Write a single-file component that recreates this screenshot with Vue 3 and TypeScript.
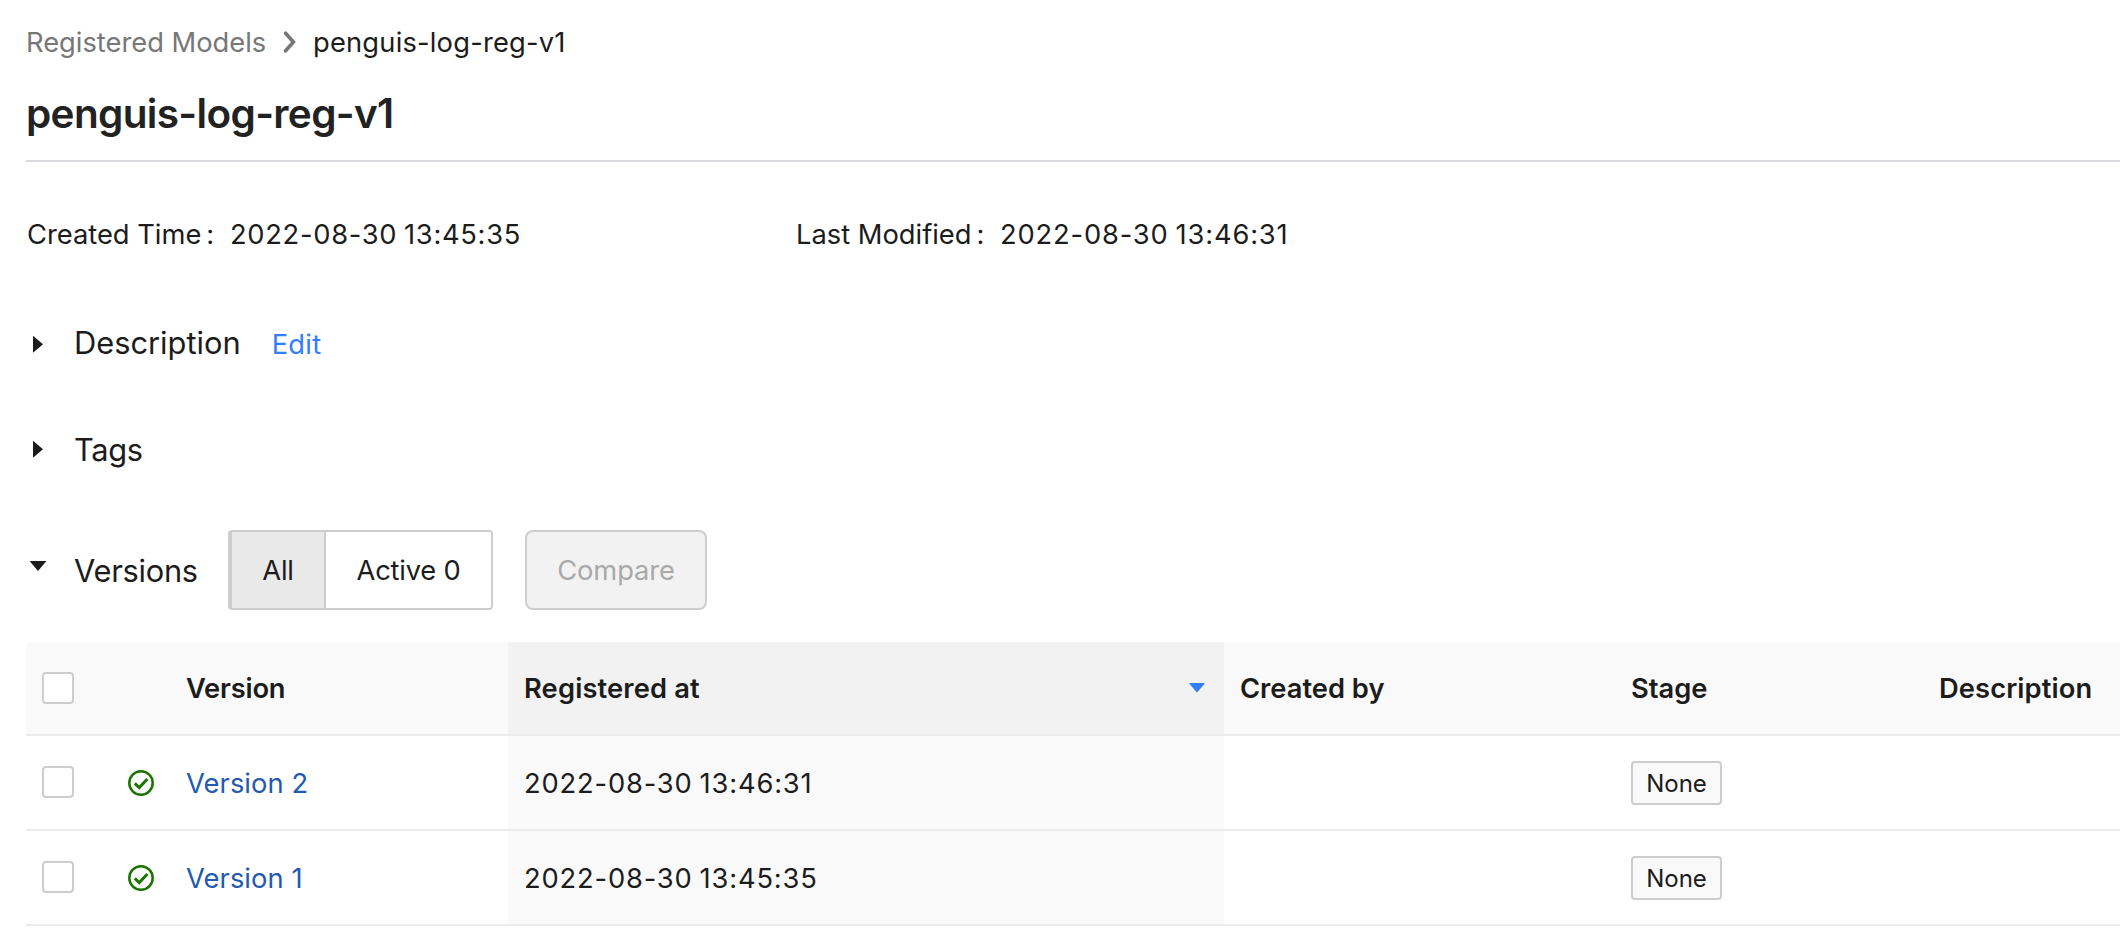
<script setup lang="ts">
interface ModelVersion {
  name: string
  registeredAt: string
  stage: string
}

const modelName = 'penguis-log-reg-v1'
const versions: ModelVersion[] = [
  { name: 'Version 2', registeredAt: '2022-08-30 13:46:31', stage: 'None' },
  { name: 'Version 1', registeredAt: '2022-08-30 13:45:35', stage: 'None' },
]
</script>

<template>
  <main class="page">
    <nav class="breadcrumb">
      <a class="crumb-link">Registered Models</a>
      <svg class="chevron" width="14" height="22" viewBox="0 0 14 22">
        <path d="M2.6 2.2 L10.4 11 L2.6 19.8" />
      </svg>
      <span class="crumb-current">{{ modelName }}</span>
    </nav>

    <h1 class="title">{{ modelName }}</h1>

    <dl class="meta">
      <div class="meta-item">
        <dt>Created Time<span class="colon">:</span></dt>
        <dd class="created-value">2022-08-30 13:45:35</dd>
      </div>
      <div class="meta-item modified">
        <dt>Last Modified<span class="colon">:</span></dt>
        <dd>2022-08-30 13:46:31</dd>
      </div>
    </dl>

    <section class="panel">
      <svg class="caret caret-description" width="18" height="18" viewBox="0 0 18 18"><path d="M4 0.7 L14 9.2 L4 17.7 Z" /></svg>
      <div class="panel-heading">
        <h2>Description</h2>
        <a class="edit">Edit</a>
      </div>
    </section>

    <section class="panel tags">
      <svg class="caret caret-tags" width="18" height="18" viewBox="0 0 18 18"><path d="M4 0.7 L14 9.2 L4 17.7 Z" /></svg>
      <h2 class="tight">Tags</h2>
    </section>

    <section class="panel versions">
      <svg class="caret caret-versions" width="18" height="10" viewBox="0 0 18 10"><path d="M0.6 0 L17.4 0 L9 10 Z" /></svg>
      <h2 class="versions-title">Versions</h2>
      <div class="segmented">
        <button class="segment selected">All</button>
        <button class="segment">Active 0</button>
      </div>
      <button class="compare" disabled>Compare</button>
    </section>

    <div class="table">
      <div class="row head">
        <div class="cell"><span class="checkbox"></span></div>
        <div class="cell"></div>
        <div class="cell version-head">Version</div>
        <div class="cell sorted">
          Registered at
          <svg class="sort" width="16" height="10" viewBox="0 0 16 10"><path d="M0.8 0 H15.2 Q16 0.3 15.4 1 L8.7 8.8 Q8 9.8 7.3 8.8 L0.6 1 Q0 0.3 0.8 0 Z" /></svg>
        </div>
        <div class="cell">Created by</div>
        <div class="cell">Stage</div>
        <div class="cell description-head">Description</div>
      </div>
      <div v-for="version in versions" :key="version.name" class="row body-row">
        <div class="cell"><span class="checkbox"></span></div>
        <div class="cell">
          <svg class="ready" width="28" height="28" viewBox="0 0 28 28">
            <circle cx="14" cy="14" r="11.7" />
            <path class="tick" d="M7.8 14.4 L12.2 18.6 L20.4 10" />
          </svg>
        </div>
        <div class="cell text-cell"><a class="version-link">{{ version.name }}</a></div>
        <div class="cell text-cell sorted date">{{ version.registeredAt }}</div>
        <div class="cell"></div>
        <div class="cell"><span class="badge">{{ version.stage }}</span></div>
        <div class="cell"></div>
      </div>
    </div>
  </main>
</template>

<style>
body {
  margin: 0;
  background: #fff;
}
</style>

<style scoped>
.page {
  box-sizing: border-box;
  height: 942px;
  padding-left: 26px;
  overflow: hidden;
  background: #fff;
  color: #1c1c1c;
  font: 400 27.3px Inter, "Noto Sans", sans-serif;
}
h1, h2, dl, dd {
  margin: 0;
}
button {
  box-sizing: border-box;
  margin: 0;
  font: inherit;
  color: inherit;
  white-space: nowrap;
}
.breadcrumb {
  display: flex;
  align-items: center;
  height: 84px;
}
.crumb-link {
  width: 257px;
  color: #777;
}
.chevron {
  margin-right: 16px;
  fill: none;
  stroke: #777;
  stroke-width: 3.6;
  stroke-linecap: round;
}
.crumb-current {
  letter-spacing: 0.2px;
}
.title {
  height: 57px;
  padding-top: 1px;
  padding-bottom: 18px;
  border-bottom: 2px solid #dadbe0;
  font-size: 40.5px;
  font-weight: 600;
  line-height: 58px;
  letter-spacing: -0.66px;
  color: #222;
}
.meta {
  display: flex;
  align-items: center;
  height: 144px;
}
.meta-item {
  display: flex;
  box-sizing: border-box;
  width: 769px;
  padding-left: 1px;
}
.meta-item dt {
  width: 203px;
}
.modified dt {
  width: 204px;
}
.colon {
  margin-left: 5px;
}
.meta-item dd {
  letter-spacing: 0.84px;
  word-spacing: -1.5px;
}
.meta-item .created-value {
  letter-spacing: 0.7px;
}
.panel {
  display: flex;
  align-items: center;
  height: 73px;
}
.panel-heading {
  display: flex;
  align-items: baseline;
}
h2 {
  font-size: 30.8px;
  font-weight: 400;
}
.tight {
  letter-spacing: -0.38px;
}
.caret {
  flex: none;
  margin: 0 27px 0 3px;
  fill: #1c1c1c;
}
.caret-description {
  margin-top: 3px;
}
.caret-tags {
  margin-top: -2px;
}
.caret-versions {
  margin-top: -8px;
}
.edit {
  margin-left: 31px;
  color: #337dff;
  letter-spacing: 0.3px;
}
.tags {
  margin-top: 34px;
}
.versions {
  height: 80px;
  margin-top: 44px;
}
.versions-title {
  width: 154px;
  letter-spacing: -0.25px;
}
.segmented {
  display: flex;
  box-sizing: border-box;
  width: 265px;
  height: 80px;
  border: 2px solid #cdcdcd;
  border-left-width: 4px;
  border-radius: 4px;
  overflow: hidden;
}
.segment {
  flex: 1;
  padding: 0;
  border: 0;
  background: #fff;
  letter-spacing: -0.2px;
}
.segment.selected {
  flex: 0 0 94px;
  border-right: 2px solid #cdcdcd;
  background: #e9e9e9;
}
.compare {
  width: 182px;
  height: 80px;
  margin-left: 32px;
  padding: 0;
  border: 2px solid #cdcdcd;
  border-radius: 8px;
  background: #f2f2f2;
  color: #a9a9a9;
  letter-spacing: -0.11px;
}
.table {
  margin-top: 32px;
}
.row {
  display: grid;
  grid-template-columns: 84px 60px 338px 716px 391px 309px 1fr;
  box-sizing: border-box;
  height: 95px;
  border-bottom: 2px solid #ebebeb;
}
.head {
  height: 94px;
  border-top-left-radius: 4px;
  background: #f9f9f9;
  font-weight: 600;
}
.cell {
  display: flex;
  align-items: center;
  min-width: 0;
  padding-left: 16px;
  white-space: nowrap;
}
.text-cell {
  padding-top: 1px;
}
.version-head {
  letter-spacing: -0.2px;
}
.description-head {
  letter-spacing: 0.1px;
  padding-left: 15px;
}
.sorted {
  justify-content: space-between;
  padding-right: 19px;
  background: #f9f9f9;
}
.head .sorted {
  background: #f2f2f2;
  letter-spacing: 0.15px;
}
.date {
  letter-spacing: 0.84px;
  word-spacing: -1.5px;
}
.sort {
  fill: #337dff;
}
.checkbox {
  box-sizing: border-box;
  width: 32px;
  height: 32px;
  border: 2px solid #cdcdcd;
  border-radius: 4px;
  background: #fff;
}
.body-row .checkbox {
  margin-bottom: 1px;
}
.ready {
  margin-left: 1px;
  fill: none;
  stroke: #1b7400;
  stroke-width: 2.5;
}
.tick {
  stroke-width: 3;
}
.version-link {
  color: #2359b0;
  letter-spacing: 0.08px;
}
.badge {
  box-sizing: border-box;
  width: 91px;
  height: 44px;
  border: 2px solid #cdcdcd;
  border-radius: 4px;
  background: #f9f9f9;
  font-size: 24px;
  line-height: 41px;
  text-align: center;
}
</style>
